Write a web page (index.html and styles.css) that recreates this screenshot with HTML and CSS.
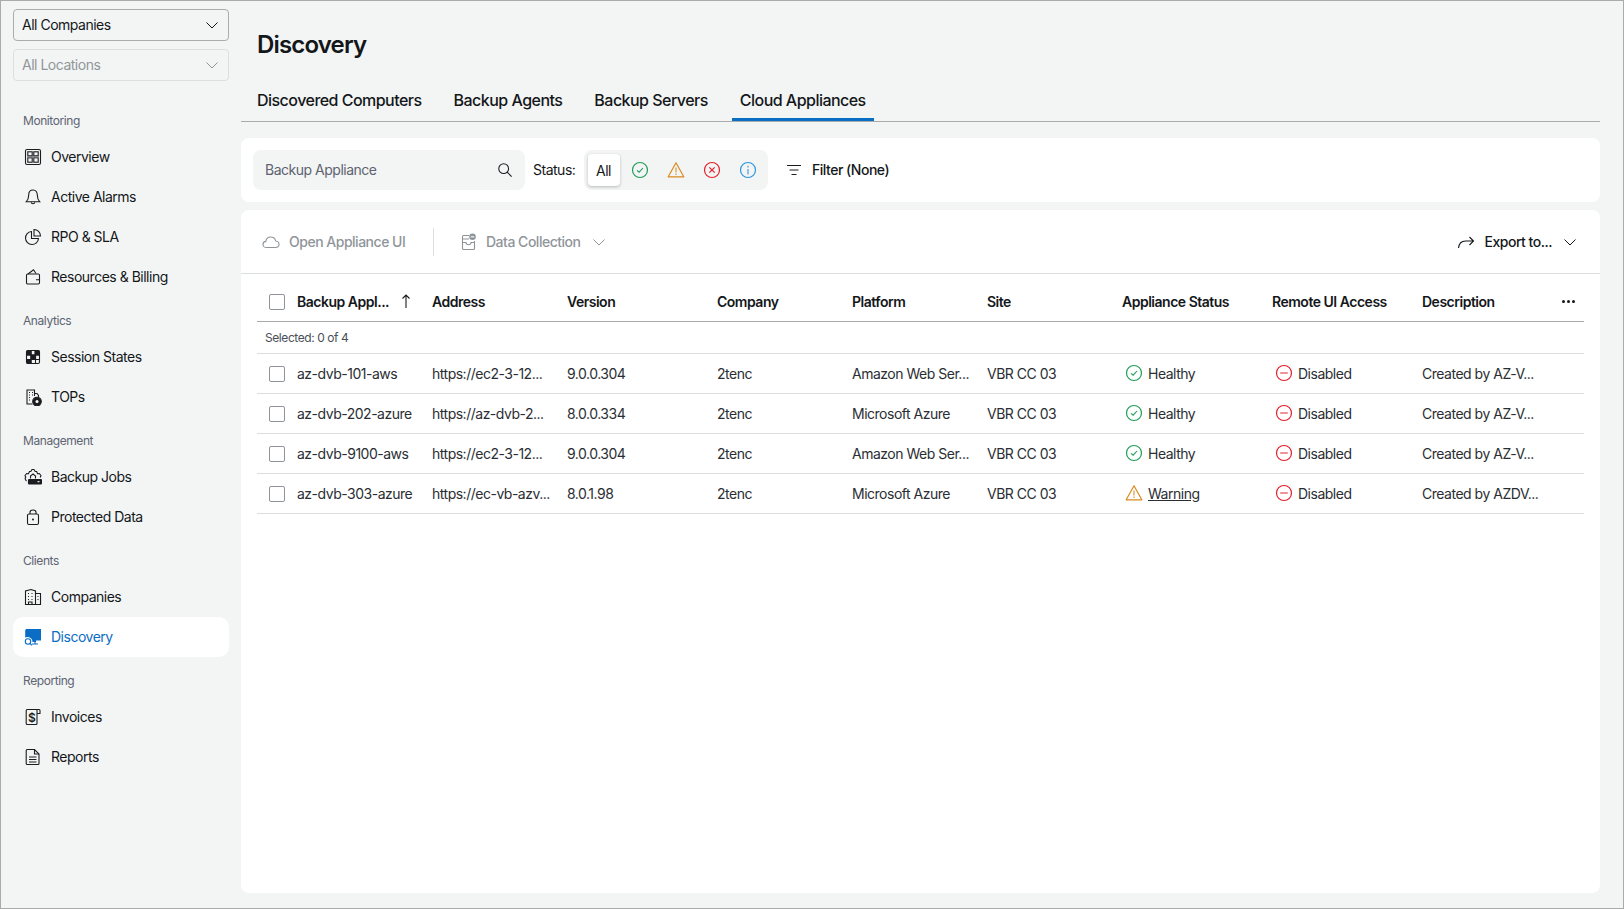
FILE: index.html
```html
<!DOCTYPE html>
<html lang="en">
<head>
<meta charset="utf-8">
<title>Discovery</title>
<link rel="stylesheet" href="styles.css">
</head>
<body>
<svg class="defs" width="0" height="0">
  <defs>
    <symbol id="chev" viewBox="0 0 16 16"><path d="M2.5 5.5 8 11l5.5-5.5" fill="none" stroke="currentColor"/></symbol>
    <symbol id="ok" viewBox="0 0 18 18"><circle cx="9" cy="9" r="7.5" fill="none" stroke="#1f9d57" stroke-width="1.2"/><path d="M6 9.3 8.1 11.2 12 7" fill="none" stroke="#1f9d57" stroke-width="1.1"/></symbol>
    <symbol id="warn" viewBox="0 0 18 18"><path d="M9 1.8 16.8 15.8H1.2Z" fill="none" stroke="#d98a1f" stroke-width="1.2" stroke-linejoin="round"/><path d="M9 6.5V11.5M9 12.6V14" fill="none" stroke="#e3ab62" stroke-width="1.5"/></symbol>
    <symbol id="err" viewBox="0 0 18 18"><circle cx="9" cy="9" r="7.5" fill="none" stroke="#e3202b" stroke-width="1.2"/><path d="M6.3 6.3 11.7 11.7M11.7 6.3 6.3 11.7" fill="none" stroke="#e3202b" stroke-width="1.2"/></symbol>
    <symbol id="info" viewBox="0 0 18 18"><circle cx="9" cy="9" r="7.5" fill="none" stroke="#2b94e0" stroke-width="1.2"/><path d="M9 8V13.5M9 4.8V6.4" fill="none" stroke="#70b5ea" stroke-width="1.6"/></symbol>
    <symbol id="off" viewBox="0 0 18 18"><circle cx="9" cy="9" r="7.5" fill="none" stroke="#e3202b" stroke-width="1.2"/><path d="M5.2 9H12.8" fill="none" stroke="#ee7a80" stroke-width="1.6"/></symbol>
  </defs>
</svg>
<div class="app">
  <aside class="sidebar">
    <div class="select"><span>All Companies</span><svg class="chev"><use href="#chev"/></svg></div>
    <div class="select select-off"><span>All Locations</span><svg class="chev"><use href="#chev"/></svg></div>

    <div class="nav-label">Monitoring</div>
    <a class="nav-item"><svg class="nav-icon" viewBox="0 0 18 18"><rect x="1.5" y="1.5" width="15" height="15" rx="1.5"/><rect x="3.8" y="3.8" width="4.4" height="4" /><rect x="9.8" y="3.8" width="4.4" height="4"/><rect x="3.8" y="9.8" width="4.4" height="4.4"/><rect x="9.8" y="9.8" width="4.4" height="4.4"/><path d="M3.5 8.9H14.5" stroke="#777" stroke-width="1.4"/></svg>Overview</a>
    <a class="nav-item"><svg class="nav-icon" viewBox="0 0 18 18"><path d="M9 2C6 2 4.700 4.300 4.700 7C4.700 10 4 12 2.200 13.800H15.800C14 12 13.300 10 13.300 7C13.300 4.300 12 2 9 2Z"/><path d="M7.200 14.200C7.400 16.300 10.600 16.300 10.800 14.200"/></svg>Active Alarms</a>
    <a class="nav-item"><svg class="nav-icon" viewBox="0 0 18 18"><path d="M7.500 3.500A6.500 6.500 0 1 0 14.500 10.500H7.500Z"/><path d="M10 1.500A6.500 6.500 0 0 1 16.500 8H10Z"/></svg>RPO &amp; SLA</a>
    <a class="nav-item"><svg class="nav-icon" viewBox="0 0 18 18"><rect x="2.500" y="6" width="13" height="10" rx="1.200"/><path d="M4 6 9.500 1.800 12 5.500M12 11.800H15.500"/></svg>Resources &amp; Billing</a>

    <div class="nav-label">Analytics</div>
    <a class="nav-item"><svg class="nav-icon" viewBox="0 0 18 18"><rect x="2.500" y="2.500" width="13" height="13" rx="1.500"/><path d="M2.500 7H15.500M2.500 11.500H15.500M7 2.500V15.500M11.500 2.500V15.500"/><path class="fill" d="M3 3H7V7H3ZM11 3H15V7H11ZM7 7H11.500V11.500H7ZM3 11.500H7V15H3Z"/></svg>Session States</a>
    <a class="nav-item"><svg class="nav-icon" viewBox="0 0 18 18"><path d="M8.500 16H3V2H10.500V8M10.500 5.500H13L14.500 7.500V9"/><path d="M5 4.500H6M8 4.500H9M5 7H6M8 7H9M5 9.500H6M5 12H6"/><circle class="fill" cx="13" cy="13.500" r="4.300"/><circle cx="13" cy="13.500" r="1.500" fill="#fff" stroke="none"/></svg>TOPs</a>

    <div class="nav-label">Management</div>
    <a class="nav-item"><svg class="nav-icon" viewBox="0 0 18 18"><path d="M2.500 13C1 11.500 1 10 1.800 9.200L1 7.500 2.700 5.500 4.500 5.700 5.500 3.500 6.800 3.500 8 1.500H10L11.200 3.500 12.700 3.500 13.500 5.700 15.300 5.500 17 7.500 16.200 9.500"/><path d="M6.500 10.500V8L9 6 11.500 8V10.500"/><rect class="fill" x="4.500" y="11.500" width="13" height="4.500" rx=".6"/><path d="M13.500 13.700H15.500" stroke="#fff"/></svg>Backup Jobs</a>
    <a class="nav-item"><svg class="nav-icon" viewBox="0 0 18 18"><rect x="3.500" y="6" width="11" height="10.500" rx="1.500"/><path d="M6 6V4.200C6 1.200 12 1.200 12 4.200V6"/><circle class="fill" cx="9" cy="11.500" r="1" stroke="none"/></svg>Protected Data</a>

    <div class="nav-label">Clients</div>
    <a class="nav-item"><svg class="nav-icon" viewBox="0 0 18 18"><path d="M1.500 16.500V3L7 1.500 11.500 3V5.500H16.500V16.500Z"/><path d="M11.500 5.500V16.500M4 5.500H5M7.500 5.500H8.500M4 8.500H5M7.500 8.500H8.500M4 11.500H5M7.500 11.500H8.500M13.500 8.500H14.500M13.500 11.500H14.500M4.500 16.500V14H8V16.500"/></svg>Companies</a>
    <a class="nav-item nav-active"><svg class="nav-icon" viewBox="0 0 18 18"><path class="fill" d="M2.800 1H17V12.500H12V14H8.500A5 5 0 0 0 1.200 9.500V2.600C1.200 1.700 1.900 1 2.800 1Z" stroke="none"/><path d="M8 16H14M11 12.500V16" /><circle cx="4" cy="13.500" r="2.700"/><path d="M6 15.500 8 17.300"/></svg>Discovery</a>

    <div class="nav-label">Reporting</div>
    <a class="nav-item"><svg class="nav-icon" viewBox="0 0 18 18"><path d="M13 1.500V15.500C13 16.200 12.500 16.500 12 16.500H3.200C2.600 16.500 2.200 16 2.200 15.500V2.500C2.200 2 2.600 1.500 3.200 1.500H15C15.700 1.500 16 2 16 2.500V5.500H13"/><text x="7.600" y="13.600" class="dollar">$</text></svg>Invoices</a>
    <a class="nav-item"><svg class="nav-icon" viewBox="0 0 18 18"><path d="M3.200 1.500H10.500L15 6V15.500C15 16.100 14.500 16.500 14 16.500H3.200C2.600 16.500 2.200 16.100 2.200 15.500V2.500C2.200 1.900 2.600 1.500 3.200 1.500Z"/><path d="M10.500 1.500V6H15M5 9H12.500M5 11.500H12.500M5 14H12.500M5 9H6"/></svg>Reports</a>
  </aside>

  <main class="main">
    <h1 class="title">Discovery</h1>
    <nav class="tabs">
      <a class="tab">Discovered Computers</a>
      <a class="tab">Backup Agents</a>
      <a class="tab">Backup Servers</a>
      <a class="tab tab-active">Cloud Appliances</a>
    </nav>

    <section class="filters">
      <div class="search">
        <span>Backup Appliance</span>
        <svg class="search-icon" viewBox="0 0 18 18"><circle cx="7.500" cy="7.500" r="5.500"/><path d="M11.500 11.500 16.500 16.500"/></svg>
      </div>
      <span class="status-label">Status:</span>
      <div class="status-group">
        <span class="status-all">All</span>
        <svg class="status-icon"><use href="#ok"/></svg>
        <svg class="status-icon"><use href="#warn"/></svg>
        <svg class="status-icon"><use href="#err"/></svg>
        <svg class="status-icon"><use href="#info"/></svg>
      </div>
      <div class="filter-btn">
        <svg class="filter-icon" viewBox="0 0 16 16"><path d="M1 3.500H15M3.500 8H12.500M5.500 12.500H10.500"/></svg>
        <span>Filter (None)</span>
      </div>
    </section>

    <section class="grid-panel">
      <div class="toolbar">
        <div class="tool tool-off tool-open">
          <svg class="tool-icon" viewBox="0 0 18 18"><path d="M4.500 14.500C2.500 14.500 1 13.100 1 11.400 1 9.700 2.300 8.500 3.800 8.400 4.200 5.700 6.200 4 8.700 4 11.200 4 13.200 5.700 13.700 8 15.600 8.200 17 9.500 17 11.300 17 13.100 15.500 14.500 13.500 14.500Z"/></svg>
          <span>Open Appliance UI</span>
        </div>
        <span class="tool-sep"></span>
        <div class="tool tool-off tool-data">
          <svg class="tool-icon" viewBox="0 0 18 18"><path d="M9 2.500H3.500C2.800 2.500 2.500 3 2.500 3.500V15.500C2.500 16.100 3 16.500 3.500 16.500H13.500C14.100 16.500 14.500 16.100 14.500 15.500V8"/><path d="M2.500 6H9M2.500 9.500H6C6 12.500 11 12.500 11 9.500H14.500"/><circle cx="12.500" cy="3.800" r="3.300" fill="currentColor" stroke="none"/><path d="M10.800 3.800H14.200" stroke="#fff"/></svg>
          <span>Data Collection</span>
          <svg class="chev tool-chev"><use href="#chev"/></svg>
        </div>
        <div class="tool tool-export">
          <svg class="tool-icon" viewBox="0 0 18 18"><path d="M1.500 15C2 10.500 5 8 8.500 8H16.500M12.500 4 16.500 8 12.500 12"/></svg>
          <span>Export to...</span>
          <svg class="chev"><use href="#chev"/></svg>
        </div>
      </div>

      <table class="grid">
        <colgroup>
          <col class="c-name"><col class="c-135"><col class="c-150"><col class="c-135"><col class="c-135"><col class="c-135"><col class="c-150"><col class="c-150"><col>
        </colgroup>
        <thead>
          <tr>
            <th><div class="namecell"><span class="check"></span><span class="name-h">Backup Appl...</span><svg class="sort" viewBox="0 0 12 16"><path d="M6 15V2M2.500 5.500 6 2 9.500 5.500"/></svg></div></th>
            <th>Address</th><th>Version</th><th>Company</th><th>Platform</th><th>Site</th><th>Appliance Status</th><th>Remote UI Access</th>
            <th><div class="desc-h"><span>Description</span><span class="dots"><i></i><i></i><i></i></span></div></th>
          </tr>
        </thead>
        <tbody>
          <tr class="selected-row"><td colspan="9">Selected: 0 of 4</td></tr>
          <tr>
            <td><div class="namecell"><span class="check"></span>az-dvb-101-aws</div></td>
            <td>https://ec2-3-12...</td><td>9.0.0.304</td><td>2tenc</td><td>Amazon Web Ser...</td><td>VBR CC 03</td>
            <td><div class="state"><svg class="state-icon"><use href="#ok"/></svg>Healthy</div></td>
            <td><div class="state"><svg class="state-icon"><use href="#off"/></svg>Disabled</div></td>
            <td>Created by AZ-V...</td>
          </tr>
          <tr>
            <td><div class="namecell"><span class="check"></span>az-dvb-202-azure</div></td>
            <td>https://az-dvb-2...</td><td>8.0.0.334</td><td>2tenc</td><td>Microsoft Azure</td><td>VBR CC 03</td>
            <td><div class="state"><svg class="state-icon"><use href="#ok"/></svg>Healthy</div></td>
            <td><div class="state"><svg class="state-icon"><use href="#off"/></svg>Disabled</div></td>
            <td>Created by AZ-V...</td>
          </tr>
          <tr>
            <td><div class="namecell"><span class="check"></span>az-dvb-9100-aws</div></td>
            <td>https://ec2-3-12...</td><td>9.0.0.304</td><td>2tenc</td><td>Amazon Web Ser...</td><td>VBR CC 03</td>
            <td><div class="state"><svg class="state-icon"><use href="#ok"/></svg>Healthy</div></td>
            <td><div class="state"><svg class="state-icon"><use href="#off"/></svg>Disabled</div></td>
            <td>Created by AZ-V...</td>
          </tr>
          <tr>
            <td><div class="namecell"><span class="check"></span>az-dvb-303-azure</div></td>
            <td>https://ec-vb-azv...</td><td>8.0.1.98</td><td>2tenc</td><td>Microsoft Azure</td><td>VBR CC 03</td>
            <td><div class="state"><svg class="state-icon"><use href="#warn"/></svg><u>Warning</u></div></td>
            <td><div class="state"><svg class="state-icon"><use href="#off"/></svg>Disabled</div></td>
            <td>Created by AZDV...</td>
          </tr>
        </tbody>
      </table>
    </section>
  </main>
</div>
</body>
</html>
```

FILE: styles.css
```css
* { box-sizing: border-box; letter-spacing: -.035em; }
html, body { margin: 0; height: 100%; }
body {
  font-family: Inter, "Liberation Sans", sans-serif;
  font-size: 14px;
  color: #14171a;
  background: #f3f5f5;
  overflow: hidden;
}
.defs { position: absolute; }
.app {
  display: flex;
  width: 1624px;
  height: 909px;
  border: 1px solid #a9abab;
  background: #f3f5f5;
}

/* Sidebar */
.sidebar {
  width: 240px;
  flex: none;
  padding: 8px 12px 0;
}
.select {
  height: 32px;
  display: flex;
  align-items: center;
  justify-content: space-between;
  padding: 0 8px 1px;
  margin-bottom: 8px;
  border: 1px solid #a9acae;
  border-radius: 4px;
}
.select-off { border-color: #dcdfe0; color: #90959a; margin-bottom: 16px; }
.chev { width: 16px; height: 16px; flex: none; }
.nav-label {
  height: 40px;
  padding: 12px 0 4px 10px;
  line-height: 24px;
  font-size: 12px;
  color: #5d6370;
}
.nav-item {
  display: flex;
  align-items: center;
  gap: 9px;
  height: 40px;
  padding: 0 0 1px 11px;
  border-radius: 10px;
  color: #14171a;
}
.nav-icon {
  width: 18px;
  height: 18px;
  flex: none;
  fill: none;
  stroke: #1a1d20;
  stroke-width: 1.1;
}
.nav-icon .fill { fill: #1a1d20; }
.dollar { font-size: 12px; font-weight: 600; text-anchor: middle; fill: #1a1d20; stroke: none; }
.nav-active { background: #fff; color: #0a6ec4; }
.nav-active .nav-icon { stroke: #0a6ec4; }
.nav-active .nav-icon .fill { fill: #0a6ec4; }

/* Main */
.main {
  flex: 1;
  min-width: 0;
  margin-right: 23px;
  display: flex;
  flex-direction: column;
}
.title {
  margin: 0;
  height: 81px;
  padding: 29px 0 0 16px;
  font-size: 24px;
  line-height: 30px;
  font-weight: 600;
}
.tabs {
  display: flex;
  gap: 16px;
  height: 40px;
  padding-left: 8px;
  border-bottom: 1px solid #a9acae;
}
.tab {
  padding: 0 8px;
  height: 39px;
  line-height: 36px;
  font-size: 16px;
  font-weight: 500;
  letter-spacing: -.033em;
}
.tab-active { border-bottom: 3px solid #0a6ec4; }

.filters {
  margin-top: 16px;
  height: 64px;
  display: flex;
  align-items: center;
  padding: 0 12px;
  background: #fff;
  border-radius: 8px;
}
.search {
  width: 272px;
  height: 40px;
  flex: none;
  display: flex;
  align-items: center;
  justify-content: space-between;
  padding: 0 12px 1px;
  background: #f3f5f5;
  border-radius: 8px;
  color: #5d6370;
}
.search-icon { width: 16px; height: 16px; fill: none; stroke: #1a1d20; stroke-width: 1.2; }
.status-label { margin-left: 8px; width: 51px; flex: none; padding-bottom: 1px; }
.status-group {
  width: 184px;
  height: 40px;
  flex: none;
  display: flex;
  align-items: center;
  padding-left: 4px;
  background: #f3f5f5;
  border-radius: 8px;
}
.status-all {
  width: 32px;
  height: 32px;
  flex: none;
  padding-right: 1px;
  line-height: 33px;
  text-align: center;
  background: #fff;
  border-radius: 4px;
  box-shadow: 0 1px 3px rgba(0, 0, 0, .25);
  margin-right: 11px;
}
.status-icon { width: 18px; height: 18px; margin-right: 18px; flex: none; }
.filter-btn { display: flex; align-items: center; gap: 10px; margin-left: 18px; padding-bottom: 1px; font-weight: 500; }
.filter-icon { width: 16px; height: 16px; fill: none; stroke: #1a1d20; }

.grid-panel {
  margin-top: 8px;
  flex: 1;
  margin-bottom: 15px;
  background: #fff;
  border-radius: 8px;
  padding-bottom: 1px;
}
.toolbar {
  height: 64px;
  display: flex;
  align-items: center;
  padding: 0 22px 0 21px;
  border-bottom: 1px solid #dcdfe0;
}
.tool { display: flex; align-items: center; gap: 9px; font-weight: 500; }
.tool-off { color: #90959a; }
.tool-open { width: 171px; }
.tool-data { gap: 8px; }
.tool-icon { width: 18px; height: 18px; flex: none; fill: none; stroke: currentColor; stroke-width: 1.1; }
.tool-sep { width: 1px; height: 28px; background: #dcdfe0; margin: 0 26px 0 0; }
.tool-chev { margin-left: 3px; }
.tool-export { margin-left: auto; gap: 10px; }

.grid {
  width: 1327px;
  margin-left: 16px;
  border-collapse: collapse;
  table-layout: fixed;
}
.c-name { width: 175px; }
.c-135 { width: 135px; }
.c-150 { width: 150px; }
th {
  height: 47px;
  text-align: left;
  font-weight: 600;
  padding: 8px 0 0;
  border-bottom: 1px solid #a9acae;
  color: #14171a;
  white-space: nowrap;
}
td {
  height: 40px;
  padding: 0;
  border-bottom: 1px solid #dcdfe0;
  color: #2a2e33;
  white-space: nowrap;
}
.selected-row td {
  height: 32px;
  padding-left: 8px;
  font-size: 12px;
  color: #4a4f57;
}
.namecell { display: flex; align-items: center; padding-left: 12px; }
.check {
  width: 16px;
  height: 16px;
  margin-right: 12px;
  margin-top: 1px;
  flex: none;
  border: 1px solid #8f9499;
  border-radius: 2px;
  background: #fff;
}
.name-h { width: 103px; }
.sort { width: 12px; height: 16px; fill: none; stroke: #1a1d20; stroke-width: 1.1; }
.desc-h { display: flex; align-items: center; justify-content: space-between; padding-right: 9px; }
.dots { display: flex; gap: 2px; }
.dots i { width: 3px; height: 3px; background: #14171a; border-radius: 50%; display: block; }
.state { display: flex; align-items: center; gap: 5px; padding-left: 3px; }
.state-icon { width: 18px; height: 18px; flex: none; }
```
